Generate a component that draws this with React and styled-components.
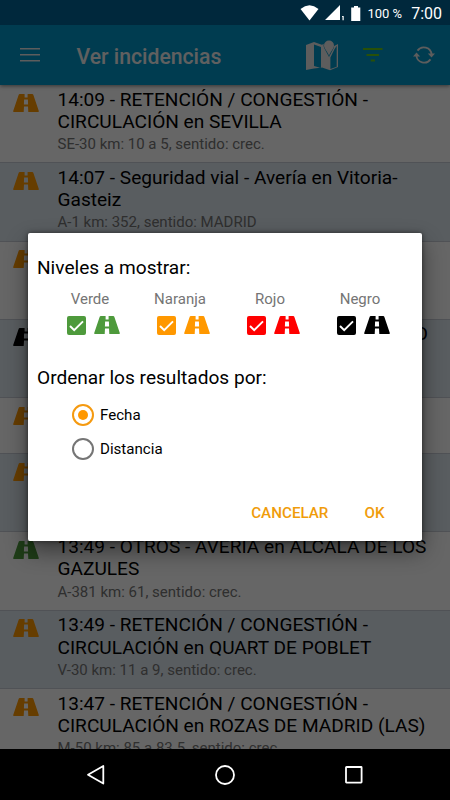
import React, { useState } from 'react';
import styled, { createGlobalStyle } from 'styled-components';

const COLORS = {
  green: '#4e9a3c',
  orange: '#ff9800',
  red: '#ff0000',
  black: '#000000',
};

const INCIDENTS = [
  {
    level: 'orange',
    title: ['14:09 - RETENCIÓN / CONGESTIÓN -', 'CIRCULACIÓN en SEVILLA'],
    place: 'SE-30 km: 10 a 5, sentido: crec.',
  },
  {
    level: 'orange',
    title: ['14:07 - Seguridad vial - Avería en Vitoria-', 'Gasteiz'],
    place: 'A-1 km: 352, sentido: MADRID',
  },
  { level: 'orange', title: ['', ''], place: '' },
  { level: 'black', title: ['O', ''], place: '', end: true },
  { level: 'orange', title: [''], place: '' },
  { level: 'orange', title: ['', ''], place: '' },
  {
    level: 'green',
    title: ['13:49 - OTROS - AVERÍA en ALCALÁ DE LOS', 'GAZULES'],
    place: 'A-381 km: 61, sentido: crec.',
  },
  {
    level: 'orange',
    title: ['13:49 - RETENCIÓN / CONGESTIÓN -', 'CIRCULACIÓN en QUART DE POBLET'],
    place: 'V-30 km: 11 a 9, sentido: crec.',
  },
  {
    level: 'orange',
    title: ['13:47 - RETENCIÓN / CONGESTIÓN -', 'CIRCULACIÓN en ROZAS DE MADRID (LAS)'],
    place: 'M-50 km: 85 a 83.5, sentido: crec.',
  },
];

const LEVELS = [
  { id: 'green', label: 'Verde' },
  { id: 'orange', label: 'Naranja' },
  { id: 'red', label: 'Rojo' },
  { id: 'black', label: 'Negro' },
];

const RoadIcon = ({ level }) => (
  <Road viewBox="0 0 26 18" fill={COLORS[level]}>
    <path d="M6.8 0H11.6V3.6H14.6V0H19.2Q20 0 20.3 .8L25.8 17Q26 18 25.2 18H15.3L15 12.6H11L10.7 18H.8Q0 18 .2 17L5.7 .8Q6 0 6.8 0ZM11.1 5.4L10.9 10.6H15.1L14.9 5.4Z" fillRule="evenodd" />
  </Road>
);

const StatusBar = () => (
  <Status>
    <svg width="19" height="16" viewBox="0 0 19 16" fill="#fff">
      <path d="M.5 4Q9.5-3.4 18.5 4L9.5 15.5Z" />
    </svg>
    <Signal width="20" height="16" viewBox="0 0 20 16" fill="#fff">
      <path d="M15 0V15H0ZM17.1 11H18.7V15.2H17.5V12.1H17Z" />
    </Signal>
    <Battery width="10" height="15" viewBox="0 0 10 15" fill="#fff">
      <path d="M3 0H7V1.6H9.3V15H.2V1.6H3Z" />
    </Battery>
    <Percent>100 %</Percent>
    <Clock>7:00</Clock>
  </Status>
);

const Toolbar = () => (
  <ToolbarContainer>
    <MenuIcon width="20" height="14" viewBox="0 0 20 14" fill="#e8e8e8">
      <path d="M0 0H20V1.6H0ZM0 6H20V7.6H0ZM0 12H20V13.6H0Z" />
    </MenuIcon>
    <Heading>Ver incidencias</Heading>
    <MapIcon width="34" height="31" viewBox="0 0 34 31">
      <path fill="#e8e8e8" fillRule="evenodd" d="M1 5L9 2L16.8 4.7L18.8 4A5 5 0 0 0 19.3 8.2L24 17L28.5 8.6L29.2 6L33 4V27L25 30.2L17 27.5L9 28.4L1 30ZM9 4.5V26L16 28V7ZM25.4 17.5V29L31.7 26.8V5.8L29.3 9.5Z" />
      <path fill="#e8e8e8" d="M24 .5A5 5 0 0 1 29 5.5C29 9 25 12 24 16C23 12 19 9 19 5.5A5 5 0 0 1 24 .5Z" />
    </MapIcon>
    <FilterIcon width="20" height="14" viewBox="0 0 20 14" fill="#65c818">
      <path d="M0 0H19.5V2H0ZM3.5 6H16V8H3.5ZM7.7 11.5H11.9V13.5H7.7Z" />
    </FilterIcon>
    <svg width="22" height="18" viewBox="0 0 22 18" fill="none" stroke="#e8e8e8" strokeWidth="1.8">
      <path d="M4.5 4.6A7.8 7.8 0 0 1 18.6 8.5M17.5 13.4A7.8 7.8 0 0 1 3.4 9.5" />
      <path fill="#e8e8e8" stroke="none" d="M14.8 7.5H22L18.5 11.4ZM0 10.5H7.2L3.5 6.6Z" />
    </svg>
  </ToolbarContainer>
);

const Incident = ({ level, title, place, striped, end }) => (
  <Row $striped={striped} $short={title.length === 1}>
    <RoadIcon level={level} />
    <Info>
      {title.map((line, i) => (
        <Title key={i} $end={end}>{line}</Title>
      ))}
      <Place>{place}</Place>
    </Info>
  </Row>
);

const FilterDialog = () => {
  const [checked, setChecked] = useState({ green: true, orange: true, red: true, black: true });
  const [order, setOrder] = useState('Fecha');

  return (
    <Dialog>
      <Question>Niveles a mostrar:</Question>
      <Levels>
        {LEVELS.map(({ id, label }) => (
          <Level key={id}>
            <LevelName>{label}</LevelName>
            <LevelPick onClick={() => setChecked({ ...checked, [id]: !checked[id] })}>
              <Checkbox $color={COLORS[id]} $on={checked[id]}>
                <svg width="15" height="12" viewBox="0 0 15 12" fill="none" stroke="#fff" strokeWidth="2">
                  <path d="M1 6L5.2 10.2L14 1.4" />
                </svg>
              </Checkbox>
              <RoadIcon level={id} />
            </LevelPick>
          </Level>
        ))}
      </Levels>
      <Question>Ordenar los resultados por:</Question>
      <Options>
        {['Fecha', 'Distancia'].map((name) => (
          <Option key={name} onClick={() => setOrder(name)}>
            <Radio $on={order === name} />
            {name}
          </Option>
        ))}
      </Options>
      <Actions>
        <Action>CANCELAR</Action>
        <Action>OK</Action>
      </Actions>
    </Dialog>
  );
};

const App = () => (
  <Screen>
    <GlobalStyle />
    <StatusBar />
    <Page>
      <Toolbar />
      <List>
        {INCIDENTS.map((incident, i) => (
          <Incident key={i} {...incident} striped={i % 2 === 1} />
        ))}
      </List>
      <Scrim />
    </Page>
    <Navbar>
      <svg width="20" height="22" viewBox="0 0 20 22">
        <path d="M17.3 2V19.5L2 10.7Z" />
      </svg>
      <svg width="22" height="22" viewBox="0 0 22 22">
        <circle cx="11" cy="11" r="9" />
      </svg>
      <svg width="20" height="20" viewBox="0 0 20 20">
        <rect x="2" y="2" width="15.6" height="15.6" rx=".5" />
      </svg>
    </Navbar>
    <FilterDialog />
  </Screen>
);

export default App;

const GlobalStyle = createGlobalStyle`
  body {
    margin: 0;
    font-family: Roboto, sans-serif;
  }

  * {
    box-sizing: border-box;
  }
`;

const Screen = styled.div`
  position: relative;
  width: 450px;
  height: 800px;
  display: flex;
  flex-direction: column;
  overflow: hidden;
  background: #000;
`;

const Status = styled.div`
  height: 25px;
  flex: none;
  display: flex;
  align-items: center;
  justify-content: flex-end;
  padding: 1px 8px 0 0;
  background: #00283c;
  color: #fff;
`;

const Signal = styled.svg`
  margin-left: 6px;
`;

const Battery = styled.svg`
  margin-left: 6px;
`;

const Percent = styled.div`
  margin-left: 6px;
  font-size: 13px;
  white-space: nowrap;
`;

const Clock = styled.div`
  margin-left: 9px;
  padding-top: 1px;
  font-size: 16px;
`;

const Page = styled.div`
  position: relative;
  height: 724px;
  flex: none;
  display: flex;
  flex-direction: column;
  overflow: hidden;
`;

const Scrim = styled.div`
  position: absolute;
  inset: 0;
  background: rgba(0, 0, 0, 0.6);
`;

const ToolbarContainer = styled.div`
  height: 60px;
  flex: none;
  z-index: 0;
  display: flex;
  align-items: center;
  padding: 0 15px 0 20px;
  background: #0096c8;
  box-shadow: 0 1px 4px rgba(0, 0, 0, 0.5);
`;

const MenuIcon = styled.svg`
  margin-right: 36.5px;
`;

const Heading = styled.div`
  flex: 1;
  padding-top: 2px;
  color: #f0f0f0;
  font-size: 21.2px;
  font-weight: 500;
`;

const MapIcon = styled.svg`
  margin-right: 24px;
`;

const FilterIcon = styled.svg`
  margin-right: 30px;
`;

const List = styled.div`
  flex: 1;
  min-height: 0;
  overflow: hidden;
`;

const Row = styled.div`
  display: flex;
  height: ${({ $short }) => ($short ? '56px' : '78.3px')};
  padding: 3.5px 0 0 13px;
  border-bottom: 1px solid #c8ccd6;
  background: ${({ $striped }) => ($striped ? '#dfe8f0' : '#fff')};
`;

const Road = styled.svg`
  width: 26px;
  height: 18px;
  flex: none;
  margin-top: 5px;
`;

const Info = styled.div`
  flex: 1;
  padding: 0 22px 0 18.5px;
  white-space: nowrap;
`;

const Title = styled.div`
  height: 22.3px;
  color: #000;
  font-size: 19.1px;
  line-height: 22.3px;
  text-align: ${({ $end }) => ($end ? 'right' : 'left')};
`;

const Place = styled.div`
  margin-top: 2px;
  color: #757575;
  font-size: 15px;
  line-height: 18px;
`;

const Navbar = styled.div`
  height: 51px;
  display: flex;
  align-items: center;
  justify-content: space-between;
  padding: 0 86px;
  background: #000;
  fill: none;
  stroke: #fff;
  stroke-width: 1.8;
  stroke-linejoin: round;
`;

const Dialog = styled.div`
  position: absolute;
  top: 233px;
  left: 28px;
  width: 394px;
  height: 308px;
  display: flex;
  flex-direction: column;
  padding: 23px 9px 14px;
  border-radius: 2px;
  background: #fff;
  box-shadow: 0 10px 22px rgba(0, 0, 0, 0.45), 0 0 5px rgba(0, 0, 0, 0.5);
`;

const Question = styled.div`
  height: 24px;
  color: #000;
  font-size: 19.1px;
  line-height: 24px;
`;

const Levels = styled.div`
  display: grid;
  grid-template-columns: repeat(4, 90px);
  height: 86px;
  padding: 10px 0 0 8px;
`;

const Level = styled.div`
  display: flex;
  flex-direction: column;
  align-items: center;
`;

const LevelName = styled.div`
  color: #757575;
  font-size: 15px;
  line-height: 19px;
`;

const LevelPick = styled.div`
  display: flex;
  align-items: flex-start;
  gap: 8px;
  margin: 2px 0 0 7px;
`;

const Checkbox = styled.div`
  width: 19px;
  height: 19px;
  display: flex;
  align-items: center;
  justify-content: center;
  margin-top: 5px;
  border: 2px solid ${({ $color }) => $color};
  border-radius: 2px;
  background: ${({ $color, $on }) => ($on ? $color : '#fff')};

  svg {
    flex: none;
  }
`;

const Options = styled.div`
  flex: 1;
  padding: 8px 0 0 35px;
`;

const Option = styled.div`
  height: 34px;
  display: flex;
  align-items: center;
  gap: 6px;
  color: #000;
  font-size: 15.1px;
`;

const Radio = styled.div`
  width: 22px;
  height: 22px;
  padding: 4px;
  border: 2px solid ${({ $on }) => ($on ? '#f59a10' : '#757575')};
  border-radius: 50%;

  &::before {
    content: '';
    display: block;
    height: 100%;
    border-radius: 50%;
    background: ${({ $on }) => ($on ? '#ff9800' : '#fff')};
  }
`;

const Actions = styled.div`
  display: flex;
  justify-content: flex-end;
  gap: 36px;
  padding-right: 28.5px;
`;

const Action = styled.div`
  color: #f09c0a;
  font-size: 15.2px;
  font-weight: 500;
  line-height: 28px;
`;
